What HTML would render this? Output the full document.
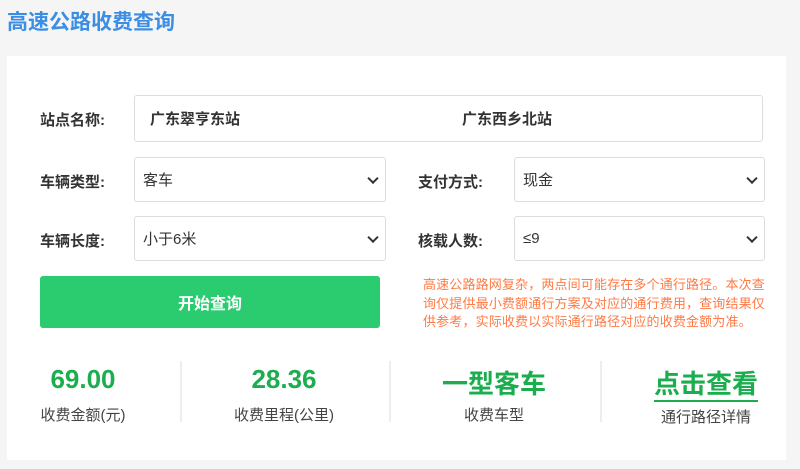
<!DOCTYPE html>
<html><head><meta charset="utf-8"><style>
*{margin:0;padding:0;box-sizing:border-box}
body{width:800px;height:469px;background:#f5f5f5;font-family:"Liberation Sans","Noto Sans CJK SC",sans-serif;position:relative;overflow:hidden;color:#333}
.a{position:absolute}
h1{position:absolute;left:7px;top:6px;font-size:21px;color:#3b8ee3;font-weight:bold}
.card{left:7px;top:56px;width:779px;height:404px;background:#fff}
.lab{font-size:15px;font-weight:bold;color:#333}
.box{border:1px solid #ddd;border-radius:3px;background:#fff;font-size:15px;color:#333;padding-left:8px;display:flex;align-items:center}
.chev{position:absolute;right:8px;top:50%;width:8px;height:8px;border-right:2px solid #333;border-bottom:2px solid #333;transform:translateY(-70%) rotate(45deg)}
.num{font-size:26px;font-weight:bold;color:#1cae4e;text-align:center;width:200px}
.sub{font-size:15px;color:#444;text-align:center;width:200px}
.div{width:2px;background:#eee;top:361px;height:61px}
</style></head><body>
<h1>高速公路收费查询</h1>
<div class="a card"></div>
<div class="a lab" style="left:40px;top:109px">站点名称:</div>
<div class="a box" style="left:134px;top:95px;width:629px;height:47px;font-weight:bold;padding-left:15px"><span>广东翠亨东站</span><span style="position:absolute;left:327px">广东西乡北站</span></div>
<div class="a lab" style="left:40px;top:171px">车辆类型:</div>
<div class="a box" style="left:134px;top:157px;width:252px;height:45px">客车<i class="chev"></i></div>
<div class="a lab" style="left:418px;top:171px">支付方式:</div>
<div class="a box" style="left:514px;top:157px;width:251px;height:45px">现金<i class="chev"></i></div>
<div class="a lab" style="left:40px;top:230px">车辆长度:</div>
<div class="a box" style="left:134px;top:216px;width:252px;height:45px">小于6米<i class="chev"></i></div>
<div class="a lab" style="left:418px;top:230px">核载人数:</div>
<div class="a box" style="left:514px;top:216px;width:251px;height:45px">≤9<i class="chev"></i></div>
<div class="a" style="left:40px;top:276px;width:340px;height:52px;background:#2bcb70;border-radius:3px;color:#fff;font-size:16px;font-weight:bold;display:flex;align-items:center;justify-content:center">开始查询</div>
<div class="a" style="left:423px;top:276px;white-space:nowrap;font-size:13px;letter-spacing:0.15px;line-height:18.5px;color:#ff7a45">高速公路路网复杂，两点间可能存在多个通行路径。本次查<br>询仅提供最小费额通行方案及对应的通行费用，查询结果仅<br>供参考，实际收费以实际通行路径对应的收费金额为准。</div>
<div class="a num" style="left:-17px;top:364px">69.00</div>
<div class="a sub" style="left:-17px;top:404px">收费金额(元)</div>
<div class="a div" style="left:180px"></div>
<div class="a num" style="left:184px;top:364px">28.36</div>
<div class="a sub" style="left:184px;top:404px">收费里程(公里)</div>
<div class="a div" style="left:389px"></div>
<div class="a num" style="left:394px;top:364px">一型客车</div>
<div class="a sub" style="left:394px;top:404px">收费车型</div>
<div class="a div" style="left:600px"></div>
<div class="a num" style="left:606px;top:364px"><span style="border-bottom:2px solid #1cae4e;padding-bottom:1px">点击查看</span></div>
<div class="a sub" style="left:606px;top:406px">通行路径详情</div>
</body></html>
